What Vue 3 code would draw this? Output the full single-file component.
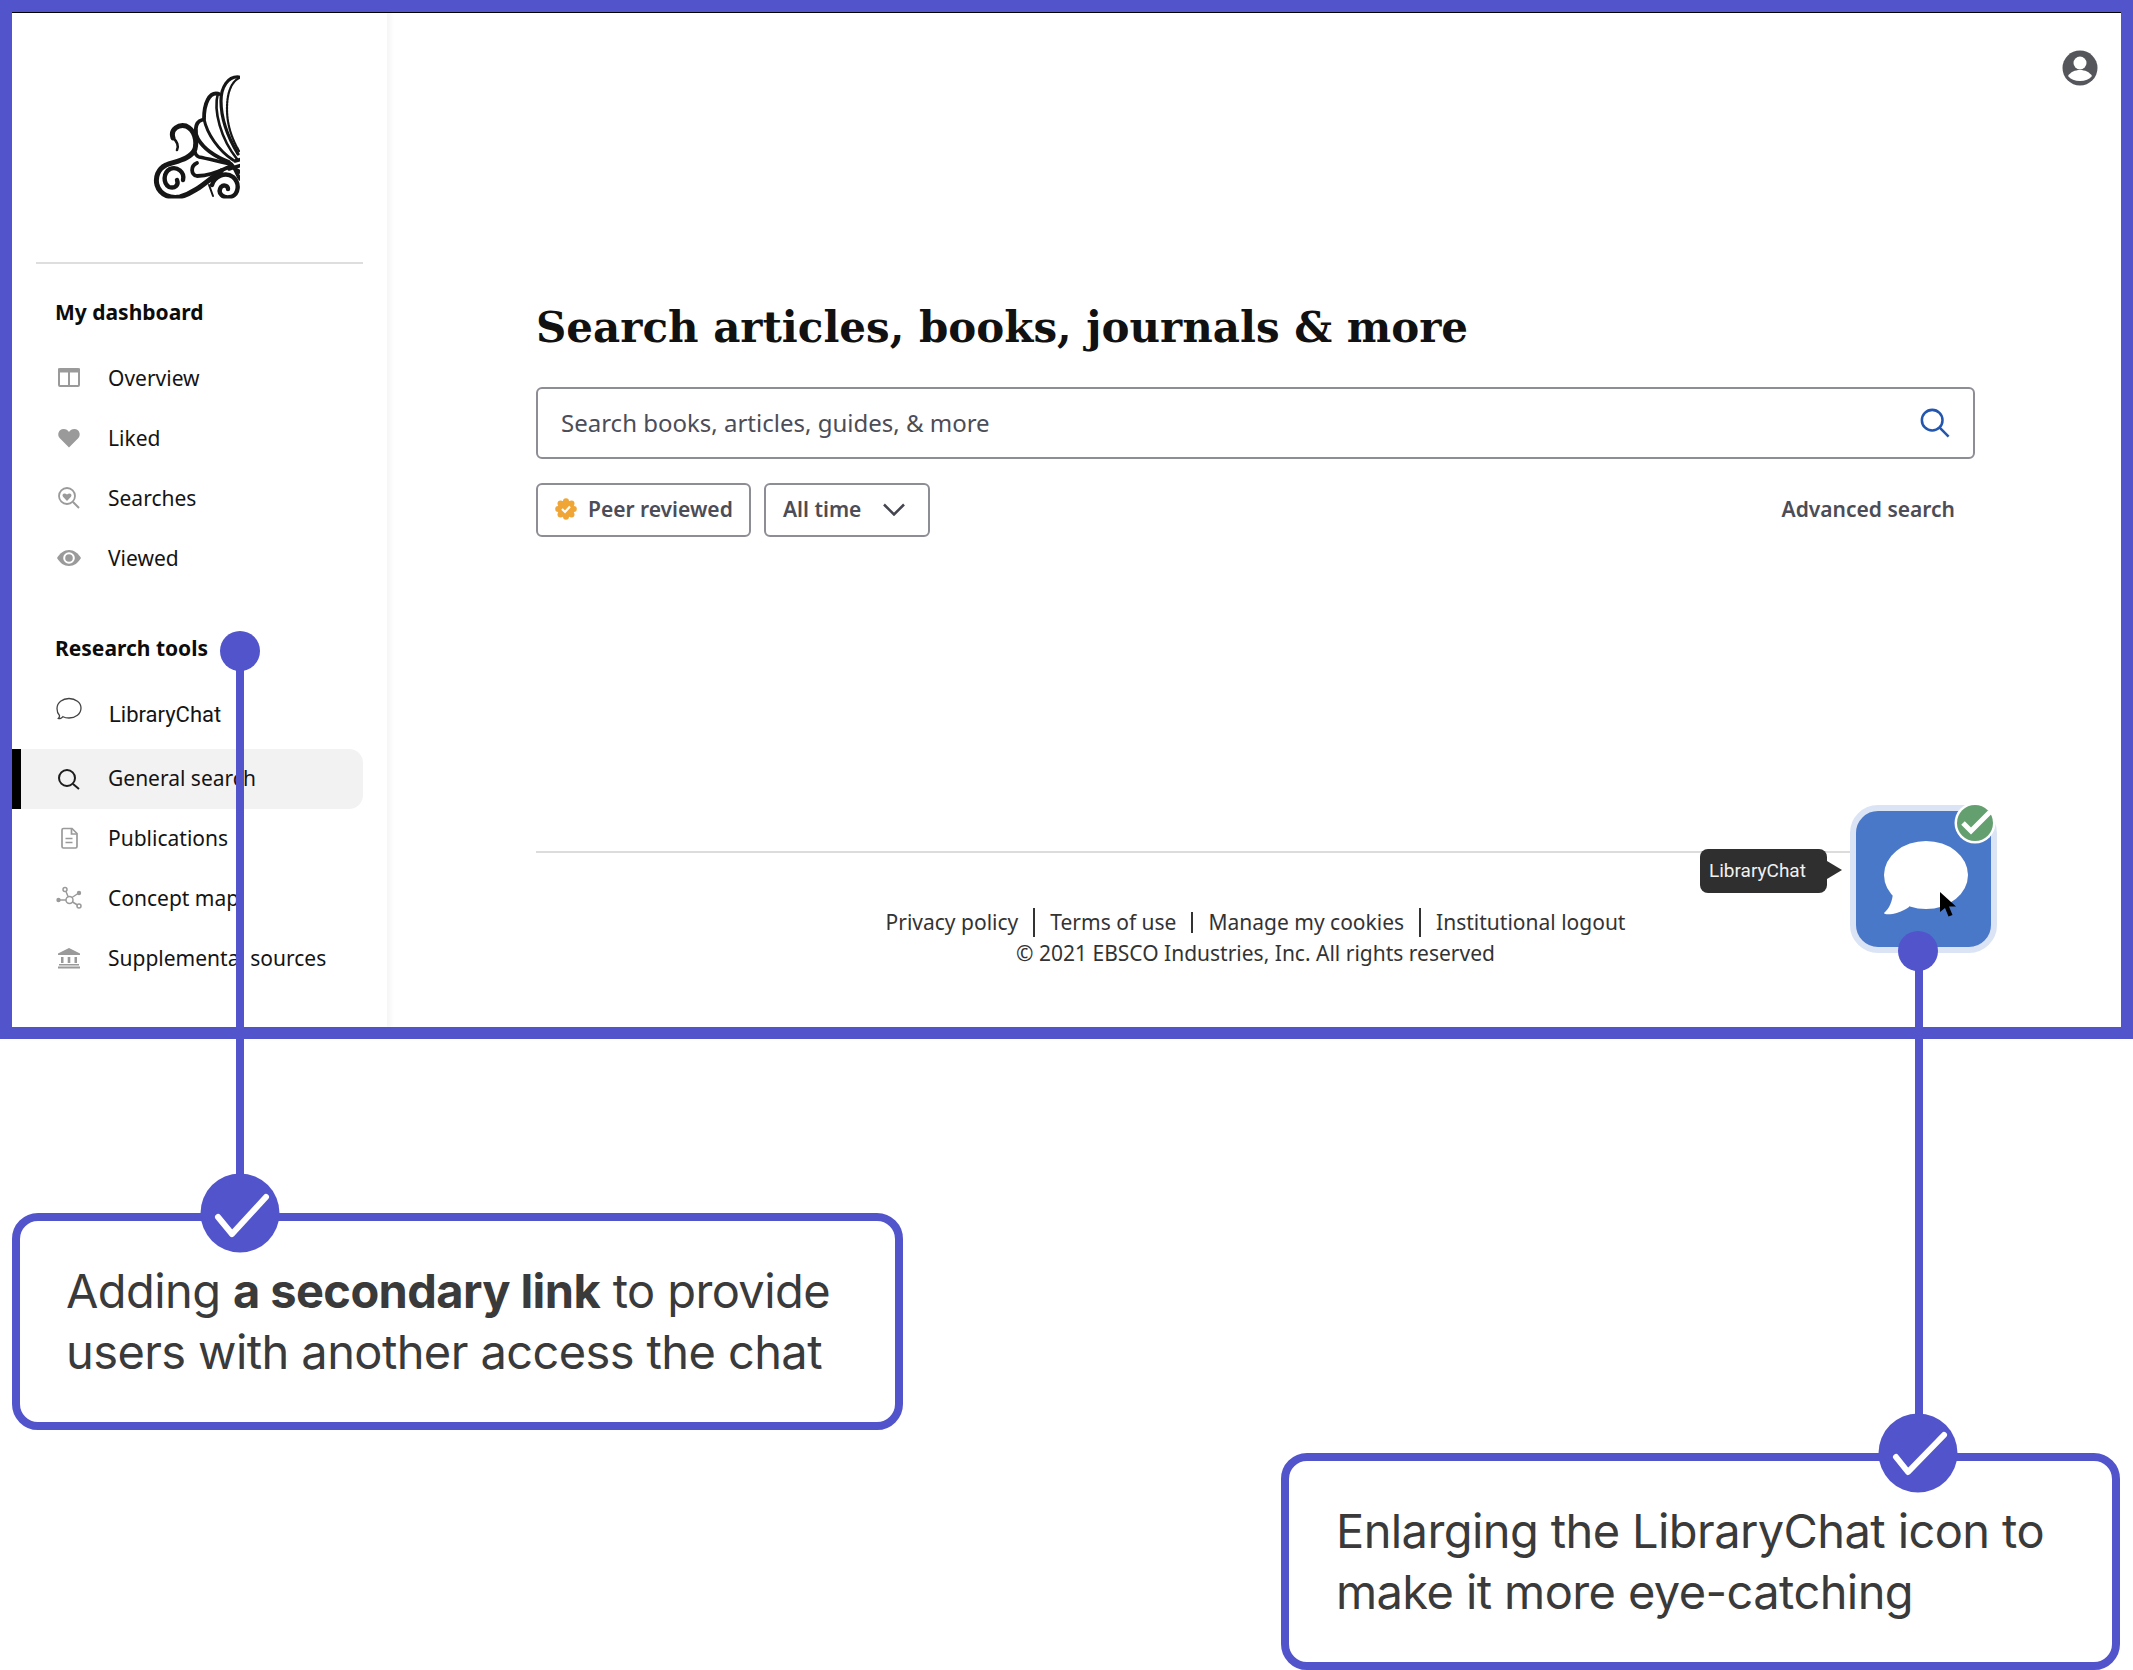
<template>
  <div class="page">
    <section class="frame">
      <!-- left navigation -->
      <aside class="sidebar">
        <div class="logo">
          <svg width="95" height="135" viewBox="150 70 95 135" fill="none" stroke="#161616" stroke-linecap="round">
            <defs>
              <clipPath id="logo-clip"><rect x="150" y="70" width="91" height="129.5" /></clipPath>
            </defs>
            <g clip-path="url(#logo-clip)">
              <path d="M240 78C229 77 222 88 222 102C222 122 230 140 239 155" stroke-width="3.2" />
              <path d="M240 79C231 84 228 96 228 110C228 126 233 140 240 152" stroke-width="2.2" stroke-dasharray="2 1" />
              <path d="M220 95C210 92 205 105 205 120" stroke-width="3.8" />
              <path d="M219 94C214 112 222 140 238 160" stroke-width="2.6" />
              <path d="M205 120C208 135 220 152 234 161" stroke-width="3" />
              <path d="M203 121C195 123 196 135 199 140C205 150 217 158 230 163" stroke-width="3.8" />
              <path d="M197 144C194 152 196 156 200 158C210 160 222 163 232 165" stroke-width="3.4" />
              <path d="M198 164C191 167 192 176 198 177C210 177 222 172 232 167" stroke-width="3.8" />
              <path d="M174 139C171 130 180 125 187 127C196 131 198 142 196 150C192 160 178 162 167 166C159 170 156 178 158 186C161 196 172 200 181 198C196 194 208 182 222 172" stroke-width="5" />
              <path d="M174 139C178 142 180 147 178 151" stroke-width="2.6" />
              <path d="M184 181C186 173 178 167 171 170C164 174 164 184 170 188C176 190 180 186 178 181" stroke-width="4.4" />
              <path d="M213 186C215 178 226 172 234 178C241 184 240 195 232 198C224 200 218 194 222 188C225 185 229 187 229 190" stroke-width="4.4" />
              <path d="M232 165C236 168 238 176 241 180M236 162L243 160M236 170L243 174M230 170L243 166" stroke-width="3.6" />
              <path d="M210 186L214 197" stroke-width="2" />
            </g>
          </svg>
        </div>
        <div class="divider"></div>

        <h3 class="nav-title first">My dashboard</h3>
        <nav>
          <a class="nav-item">
            <svg class="nav-icon" viewBox="0 0 26 26" fill="none" stroke="#9a9a9a">
              <rect x="3" y="5" width="20" height="17" rx="1" stroke-width="2" />
              <path d="M2 4.500h22v4H2z" fill="#9a9a9a" stroke="none" />
              <path d="M13 6v16" stroke-width="2" />
            </svg>
            Overview
          </a>
          <a class="nav-item">
            <svg class="nav-icon" viewBox="0 0 26 26" fill="#9a9a9a">
              <path d="M13 23.500L3.600 14C.8 11 2.500 5 7.600 5c2.400 0 4.200 1.200 5.400 3 1.200-1.800 3-3 5.400-3 5.100 0 6.800 6 4 9z" />
            </svg>
            Liked
          </a>
          <a class="nav-item">
            <svg class="nav-icon" viewBox="0 0 26 26" fill="none" stroke="#9a9a9a">
              <circle cx="11" cy="12" r="8" stroke-width="1.800" />
              <path d="M17 18l6 6" stroke-width="2" />
              <path d="M11 17l-4-4.200c-1.600-2 .9-4.600 4-2.300 3.100-2.300 5.600.3 4 2.300z" fill="#9a9a9a" stroke="none" />
            </svg>
            Searches
          </a>
          <a class="nav-item">
            <svg class="nav-icon" viewBox="0 0 26 26" fill="#9a9a9a">
              <path d="M1 14C4 9 8 6 13 6s9 3 12 8c-3 5-7 8-12 8s-9-3-12-8z" />
              <circle cx="13" cy="14" r="5.800" fill="#fff" />
              <circle cx="13" cy="14" r="3.800" />
            </svg>
            Viewed
          </a>
        </nav>

        <h3 class="nav-title second">Research tools</h3>
        <nav>
          <a class="nav-item chat-link">
            <svg class="nav-icon" viewBox="0 0 26 26" fill="none" stroke="#444" stroke-width="1.300">
              <path d="M3.500 20.500C1 18 1 15.500 1 13.500C1 7.500 6.500 3.500 13 3.500S25 7.500 25 13C25 19 19.500 23 13 23C10.500 23 8.500 22.500 7 21.700C6 23 3.500 24 2.300 23.500C3.300 22.700 3.700 21.700 3.500 20.500Z" />
            </svg>
            LibraryChat
          </a>
          <a class="nav-item active">
            <svg class="nav-icon" viewBox="0 0 26 26" fill="none" stroke="#1d1d1d" stroke-width="2">
              <circle cx="11" cy="14" r="8" />
              <path d="M17 20l6 5" />
            </svg>
            General search
          </a>
          <a class="nav-item">
            <svg class="nav-icon" viewBox="0 0 26 26" fill="none" stroke="#9a9a9a" stroke-width="1.700">
              <path d="M6 6a1.500 1.500 0 0 1 1.500-1.500H16L21 9.500V22.500A1.500 1.500 0 0 1 19.500 24H7.500A1.500 1.500 0 0 1 6 22.500Z" />
              <path d="M15.500 4.500V10H21M9.500 14.500h7M9.500 18.500h7" />
            </svg>
            Publications
          </a>
          <a class="nav-item">
            <svg class="nav-icon" viewBox="0 0 26 26" fill="none" stroke="#9a9a9a" stroke-width="1.500">
              <circle cx="13.500" cy="16" r="3.500" />
              <circle cx="9" cy="5.500" r="2" />
              <circle cx="23" cy="22" r="2" />
              <path d="M10 7.500l2 5M16.500 18l5 3M16 13.500l6-4M4 16h6" />
              <circle cx="2.500" cy="16" r="2.200" fill="#9a9a9a" stroke="none" />
              <circle cx="23" cy="9" r="2.200" fill="#9a9a9a" stroke="none" />
            </svg>
            Concept map
          </a>
          <a class="nav-item">
            <svg class="nav-icon" viewBox="0 0 26 26" fill="#9a9a9a">
              <path d="M13 4L24 9.500V11H2V9.500Z" />
              <path d="M5 13h2.500v6H5zM11.700 13h2.600v6h-2.600zM18.500 13H21v6h-2.500z" />
              <path d="M3 20h20v1.500H3zM2 22.500h22V24.500H2z" />
            </svg>
            Supplemental sources
          </a>
        </nav>
      </aside>

      <main class="content">
        <div class="topbar">
          <svg width="36" height="36" viewBox="0 0 36 36">
            <circle cx="18" cy="18" r="17.500" fill="#55565c" />
            <circle cx="18" cy="13" r="6.500" fill="#fff" />
            <path d="M6 26c2.500-4 7-6 12-6s9.500 2 12 6c-2.500 3.200-7 5-12 5s-9.500-1.800-12-5z" fill="#fff" />
          </svg>
        </div>

        <div class="search-area">
          <h1>Search articles, books, journals &amp; more</h1>
          <div class="search-box">
            <span>Search books, articles, guides, &amp; more</span>
            <svg width="30" height="30" viewBox="0 0 32 32" fill="none" stroke="#2356ae" stroke-width="2.700">
              <circle cx="13" cy="13" r="11" />
              <path d="M21 21l9.500 9.500" />
            </svg>
          </div>
          <div class="filters">
            <button class="filter peer">
              <svg width="22" height="22" viewBox="0 0 22 22">
                <g fill="#f0a636">
                  <circle cx="11" cy="11" r="8.500" />
                  <circle cx="11" cy="3.200" r="3" />
                  <circle cx="11" cy="18.800" r="3" />
                  <circle cx="3.200" cy="11" r="3" />
                  <circle cx="18.800" cy="11" r="3" />
                  <circle cx="5.500" cy="5.500" r="3" />
                  <circle cx="16.500" cy="5.500" r="3" />
                  <circle cx="5.500" cy="16.500" r="3" />
                  <circle cx="16.500" cy="16.500" r="3" />
                </g>
                <path d="M7 11l3 3 5-5.500" fill="none" stroke="#fff" stroke-width="2.200" />
              </svg>
              Peer reviewed
            </button>
            <button class="filter time">
              All time
              <svg width="22" height="13" viewBox="0 0 22 13" fill="none" stroke="#44454e" stroke-width="2.500">
                <path d="M1 1.500l10 10 10-10" />
              </svg>
            </button>
            <a class="advanced">Advanced search</a>
          </div>
        </div>

        <footer class="site-footer">
          <div class="links">
            <a>Privacy policy</a>
            <i class="sep"></i>
            <a>Terms of use</a>
            <i class="sep short"></i>
            <a>Manage my cookies</a>
            <i class="sep"></i>
            <a>Institutional logout</a>
          </div>
          <p>© 2021 EBSCO Industries, Inc. All rights reserved</p>
        </footer>
      </main>
    </section>

    <!-- floating chat button -->
    <div class="tooltip">LibraryChat</div>
    <div class="chat-btn">
      <svg class="bubble" width="84" height="75" viewBox="0 0 84 75" fill="#fff">
        <ellipse cx="42" cy="34" rx="42" ry="34" />
        <path d="M9 50C9 60 5 68 0 72C0 74 12 75 25 66L30 50Z" />
      </svg>
      <svg class="check-badge" width="42" height="42" viewBox="0 0 42 42">
        <circle cx="21" cy="21" r="20.500" fill="#fff" />
        <circle cx="21" cy="21" r="18" fill="#649f6f" />
        <path d="M9 21l8 8 19-19" fill="none" stroke="#fff" stroke-width="5" />
      </svg>
      <svg class="cursor" width="18" height="26" viewBox="0 0 18 26">
        <path d="M1 0V20L6 16L9.500 24.500L13.500 23L10 14.500H17Z" fill="#000" />
      </svg>
    </div>

    <!-- annotation connectors -->
    <div class="wire wire-left"></div>
    <div class="dot dot-left"></div>
    <div class="wire wire-right"></div>
    <div class="dot dot-right"></div>

    <div class="callouts">
      <div class="callout left">
        <svg class="tick tick-left" width="80" height="80" viewBox="0 0 80 80">
          <circle cx="40" cy="40" r="39.500" fill="#5254cc" />
          <path d="M18 44l14 17L66 24" fill="none" stroke="#fff" stroke-width="6" stroke-linecap="round" stroke-linejoin="round" />
        </svg>
        <p>Adding <b>a secondary link</b> to provide<br />users with another access the chat</p>
      </div>
      <div class="callout right">
        <svg class="tick tick-right" width="80" height="80" viewBox="0 0 80 80">
          <circle cx="40" cy="40" r="39.500" fill="#5254cc" />
          <path d="M18 44l12 15L66 22" fill="none" stroke="#fff" stroke-width="6" stroke-linecap="round" stroke-linejoin="round" />
        </svg>
        <p>Enlarging the LibraryChat icon to<br />make it more eye-catching</p>
      </div>
    </div>
  </div>
</template>

<script setup>
</script>

<style>
html,
body {
  background: #fff;
}
</style>

<style scoped>
.page {
  position: relative;
  width: 2133px;
  height: 1670px;
  overflow: hidden;
  font-family: 'Noto Sans', sans-serif;
  color: #111;
}

.frame {
  box-sizing: border-box;
  display: flex;
  height: 1039px;
  border: 12px solid #5254cc;
  background: #fff;
}

/* sidebar */
.sidebar {
  box-sizing: border-box;
  flex: 0 0 375px;
  border-top: 1px solid #000;
  box-shadow: 4px 0 4px rgba(0, 0, 0, 0.04);
}

.logo {
  display: flex;
  justify-content: center;
  height: 193px;
  padding: 56px 6px 0 0;
}

.divider {
  height: 2px;
  margin: 0 24px;
  background: #dedede;
}

.nav-title {
  margin: 0 0 0 43px;
  font-size: 21px;
  line-height: 28px;
  font-weight: 700;
  color: #0c0c0c;
}

.nav-title.first {
  margin-top: 34px;
  margin-bottom: 23px;
}

.nav-title.second {
  margin-top: 45px;
  margin-bottom: 23px;
}

.nav-item {
  box-sizing: border-box;
  display: flex;
  align-items: center;
  gap: 26px;
  height: 60px;
  padding: 0 0 2px 44px;
  font-size: 21px;
  color: #141414;
}

.nav-icon {
  flex: none;
  width: 26px;
  height: 26px;
  margin-bottom: 2px;
}

.chat-link {
  margin-bottom: 4px;
  gap: 27px;
  font-family: Roboto, sans-serif;
  font-size: 22px;
}

.chat-link .nav-icon {
  margin-bottom: 12px;
}

.nav-item.active {
  margin-right: 24px;
  padding-left: 35px;
  border-left: 9px solid #000;
  border-radius: 0 14px 14px 0;
  background: #f2f2f2;
}

/* main column */
.content {
  flex: 1;
  display: flex;
  flex-direction: column;
  padding-left: 3px;
  border-top: 1px solid #000;
}

.topbar {
  display: flex;
  justify-content: flex-end;
  padding: 37px 23px 0 0;
}

.search-area {
  padding: 0 146px;
}

h1 {
  margin: 0;
  padding-top: 212px;
  font-family: 'DejaVu Serif', serif;
  font-size: 42px;
  line-height: 60px;
  font-weight: 700;
  color: #111;
  white-space: nowrap;
}

.search-box {
  box-sizing: border-box;
  display: flex;
  align-items: center;
  justify-content: space-between;
  height: 72px;
  margin-top: 29px;
  padding: 0 23px;
  border: 2px solid #8d8d95;
  border-radius: 6px;
  font-size: 24px;
  color: #4c4d56;
}

.search-box span {
  margin-bottom: 2px;
}

.filters {
  display: flex;
  align-items: center;
  gap: 13px;
  margin-top: 24px;
}

.filter {
  box-sizing: border-box;
  display: flex;
  align-items: center;
  height: 54px;
  padding: 0 0 2px;
  border: 2px solid #8d8d95;
  border-radius: 6px;
  background: #fff;
  font-family: inherit;
  font-size: 21px;
  font-weight: 600;
  color: #4c4d56;
}

.peer {
  gap: 11px;
  width: 215px;
  padding-left: 17px;
}

.time {
  gap: 22px;
  width: 166px;
  padding-left: 17px;
}

.advanced {
  margin-left: auto;
  margin-right: 20px;
  margin-bottom: 2px;
  font-size: 21px;
  font-weight: 600;
  color: #4c4d56;
}

.site-footer {
  margin: auto 146px 0;
  height: 176px;
  box-sizing: border-box;
  padding-top: 53px;
  border-top: 2px solid #dcdcdc;
  text-align: center;
  font-size: 21px;
  line-height: 31px;
  color: #333;
}

.links {
  display: flex;
  justify-content: center;
  align-items: center;
  gap: 15px;
  height: 32px;
}

.sep {
  width: 2px;
  height: 29px;
  background: #333;
}

.sep.short {
  height: 21px;
}

.site-footer p {
  margin: 0;
}

/* chat button */
.chat-btn {
  position: absolute;
  left: 1850px;
  top: 805px;
  box-sizing: border-box;
  width: 147px;
  height: 148px;
  border: 6px solid #dbe4f4;
  border-radius: 28px;
  background: #4a78c8;
}

.bubble {
  position: absolute;
  left: 28px;
  top: 30px;
}

.check-badge {
  position: absolute;
  left: 98px;
  top: -9px;
}

.cursor {
  position: absolute;
  left: 83px;
  top: 81px;
}

.tooltip {
  position: absolute;
  left: 1700px;
  top: 849px;
  box-sizing: border-box;
  width: 127px;
  height: 44px;
  padding-left: 9px;
  border-radius: 8px;
  background: #2f2f2f;
  font-family: Roboto, sans-serif;
  font-size: 19px;
  line-height: 44px;
  color: #f1f1f1;
}

.tooltip::after {
  content: '';
  position: absolute;
  left: 127px;
  top: 12px;
  border-left: 15px solid #2f2f2f;
  border-top: 9px solid transparent;
  border-bottom: 9px solid transparent;
}

/* connectors */
.wire {
  position: absolute;
  width: 8px;
  background: #5254cc;
}

.wire-left {
  left: 236px;
  top: 650px;
  height: 560px;
}

.wire-right {
  left: 1915px;
  top: 951px;
  height: 500px;
}

.dot {
  position: absolute;
  width: 40px;
  height: 40px;
  border-radius: 50%;
  background: #5254cc;
}

.dot-left {
  left: 220px;
  top: 631px;
}

.dot-right {
  left: 1898px;
  top: 931px;
}

/* callouts */
.callouts {
  display: flex;
  justify-content: space-between;
  height: 631px;
  padding: 0 13px 0 12px;
}

.callout {
  position: relative;
  box-sizing: border-box;
  display: flex;
  align-items: center;
  height: 217px;
  border: 8px solid #5254cc;
  border-radius: 26px;
  background: #fff;
}

.callout p {
  margin: 0;
  padding-bottom: 2px;
  font-family: Inter, sans-serif;
  font-size: 47px;
  line-height: 61px;
  font-weight: 400;
  letter-spacing: -0.6px;
  color: #3a3a3a;
  white-space: nowrap;
}

.callout b {
  font-weight: 700;
}

.callout.left {
  align-self: flex-start;
  width: 891px;
  margin-top: 174px;
  padding-left: 46px;
}

.callout.right {
  align-self: flex-end;
  width: 839px;
  padding-left: 47px;
}

.tick {
  position: absolute;
  top: -48px;
}

.tick-left {
  left: 180px;
}

.tick-right {
  left: 589px;
}
</style>
